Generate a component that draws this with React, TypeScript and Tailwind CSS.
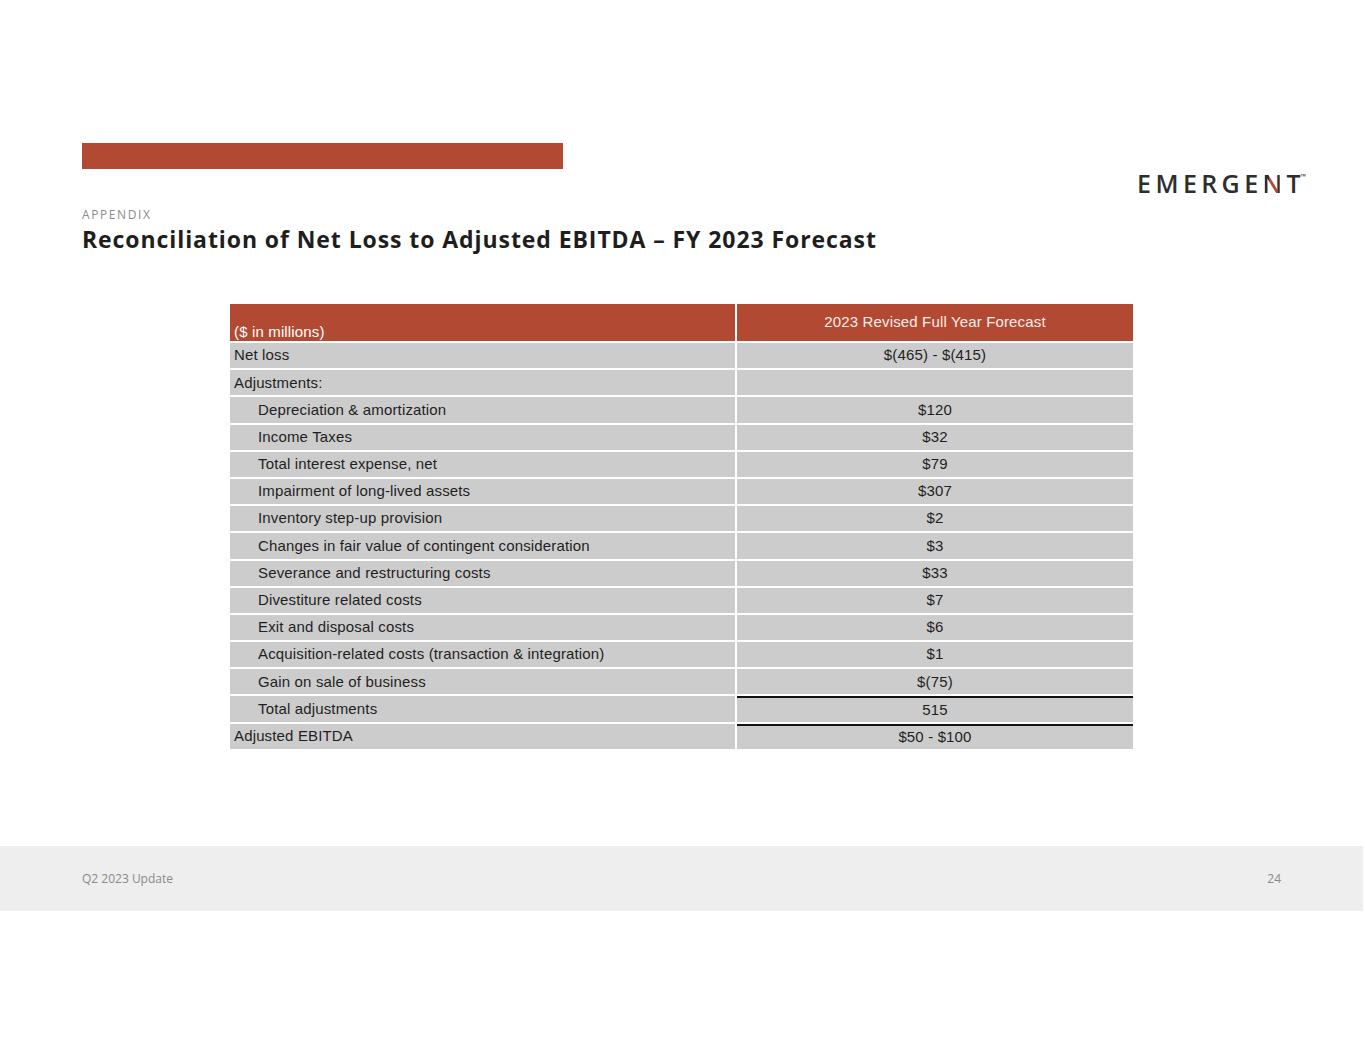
const rows: { label: string; value: string; indent?: boolean; ruleAbove?: boolean }[] = [
  { label: "Net loss", value: "$(465) - $(415)" },
  { label: "Adjustments:", value: "" },
  { label: "Depreciation & amortization", value: "$120", indent: true },
  { label: "Income Taxes", value: "$32", indent: true },
  { label: "Total interest expense, net", value: "$79", indent: true },
  { label: "Impairment of long-lived assets", value: "$307", indent: true },
  { label: "Inventory step-up provision", value: "$2", indent: true },
  { label: "Changes in fair value of contingent consideration", value: "$3", indent: true },
  { label: "Severance and restructuring costs", value: "$33", indent: true },
  { label: "Divestiture related costs", value: "$7", indent: true },
  { label: "Exit and disposal costs", value: "$6", indent: true },
  { label: "Acquisition-related costs (transaction & integration)", value: "$1", indent: true },
  { label: "Gain on sale of business", value: "$(75)", indent: true },
  { label: "Total adjustments", value: "515", indent: true, ruleAbove: true },
  { label: "Adjusted EBITDA", value: "$50 - $100", ruleAbove: true },
]

function Logo() {
  return (
    <div className="flex items-start text-[#2e2e2e] font-semibold text-[25px] leading-none tracking-[4.4px] font-['Open_Sans',sans-serif]">
      <span>EMERGE</span>
      <span className="bg-[linear-gradient(90deg,#2e2e2e_0%,#2e2e2e_24%,#b24a33_24%,#b24a33_64%,#2e2e2e_64%,#2e2e2e_100%)] bg-clip-text text-transparent">
        N
      </span>
      <span className="tracking-normal">T</span>
      <span className="text-[7px] tracking-normal mt-[2px]">™</span>
    </div>
  )
}

export default function App() {
  return (
    <div className="w-[1365px] h-[1055px] bg-white relative font-['Liberation_Sans',Arial,sans-serif]">
      <div className="pl-[82px] pr-[59px] pt-[143px] flex justify-between items-start">
        <div>
          <div className="w-[481px] h-[26px] bg-[#b24a33]" />
          <div className="mt-[40px] text-[12px] tracking-[1.6px] text-[#8a8a8a] font-['Open_Sans',sans-serif] leading-none">
            APPENDIX
          </div>
          <h1 className="mt-[7px] whitespace-nowrap text-[23px] font-bold tracking-[0.92px] text-[#1e1e1e] leading-none font-['Open_Sans',sans-serif]">
            Reconciliation of Net Loss to Adjusted EBITDA – FY 2023 Forecast
          </h1>
        </div>
        <div className="mt-[28px]">
          <Logo />
        </div>
      </div>

      <div className="ml-[230px] mt-[53px] w-[903px] text-[15px] tracking-[0.15px] text-[#1f1f1f]">
        <div className="flex h-[37px] gap-[2px] text-white">
          <div className="w-[505px] bg-[#b24a33] flex items-end px-[4px] leading-[18px]">($ in millions)</div>
          <div className="flex-1 bg-[#b24a33] flex items-center justify-center text-[#fbeeea]">
            2023 Revised Full Year Forecast
          </div>
        </div>
        {rows.map((r) => (
          <div key={r.label} className="flex h-[27.2px] gap-[2px] pt-[2px]">
            <div className={`w-[505px] bg-[#cccccc] flex items-center ${r.indent ? "pl-[28px]" : "pl-[4px]"}`}>
              {r.label}
            </div>
            <div
              className={`flex-1 bg-[#cccccc] flex items-center justify-center ${r.ruleAbove ? "border-t-2 border-[#111111]" : ""}`}
            >
              {r.value}
            </div>
          </div>
        ))}
      </div>

      <div className="absolute left-0 top-[846px] w-[1363px] h-[65px] bg-[#eeeeee] flex items-center justify-between pl-[82px] pr-[82px] text-[12px] text-[#8a8a8a] font-['Open_Sans',sans-serif]">
        <span>Q2 2023 Update</span>
        <span>24</span>
      </div>
    </div>
  )
}
